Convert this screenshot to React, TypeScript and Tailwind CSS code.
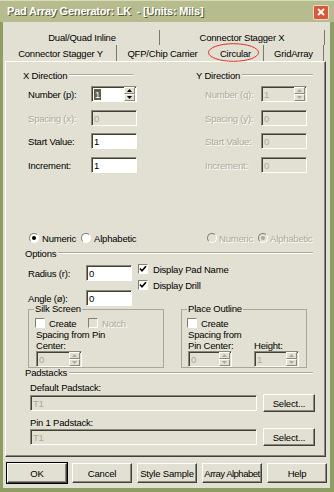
import React from "react";

type Kids = { children?: React.ReactNode; className?: string };

function Sunken({ children, className = "", disabled = false }: Kids & { disabled?: boolean }) {
  return (
    <div
      className={`flex h-[16px] items-center border border-t-[#8a8878] border-l-[#8a8878] border-b-white border-r-white shadow-[inset_1px_1px_0_#404036] ${
        disabled ? "bg-[#e2e0d2] text-[#aca899]" : "bg-white text-black"
      } ${className}`}
    >
      {children}
    </div>
  );
}

function Arrow({ up, disabled }: { up?: boolean; disabled?: boolean }) {
  return (
    <div className="flex flex-1 items-center justify-center border border-t-white border-l-white border-b-[#8a8878] border-r-[#8a8878] bg-[#e2e0d2]">
      <svg width="5" height="3" viewBox="0 0 5 3">
        <path d={up ? "M0 3 L2.5 0 L5 3Z" : "M0 0 L2.5 3 L5 0Z"} fill={disabled ? "#aca899" : "#000"} />
      </svg>
    </div>
  );
}

function SpinBox({ value, className = "", disabled, selected }: { value: string; className?: string; disabled?: boolean; selected?: boolean }) {
  return (
    <Sunken className={className} disabled={disabled}>
      <span className="flex-1 pl-[2px]">
        {selected ? <span className="bg-[#5f5f50] px-px text-white">{value}</span> : value}
      </span>
      <div className="mr-px flex h-[14px] w-[11px] flex-col">
        <Arrow up disabled={disabled} />
        <Arrow disabled={disabled} />
      </div>
    </Sunken>
  );
}

function Radio({ checked, disabled }: { checked?: boolean; disabled?: boolean }) {
  return (
    <span
      className={`flex h-[10px] w-[10px] shrink-0 items-center justify-center rounded-full border border-t-[#808070] border-l-[#808070] border-b-white border-r-white ${
        disabled ? "bg-[#e2e0d2]" : "bg-white"
      }`}
    >
      {checked && <span className={`h-[4px] w-[4px] rounded-full ${disabled ? "bg-[#aca899]" : "bg-black"}`} />}
    </span>
  );
}

function Check({ checked, disabled }: { checked?: boolean; disabled?: boolean }) {
  return (
    <span
      className={`flex h-[10px] w-[10px] shrink-0 items-center justify-center border border-t-[#808070] border-l-[#808070] border-b-white border-r-white ${
        disabled ? "bg-[#e2e0d2]" : "bg-white"
      }`}
    >
      {checked && (
        <svg width="8" height="8" viewBox="0 0 8 8">
          <path d="M1 3.5 L3 5.8 L7 1.2" stroke="#000" strokeWidth="1.6" fill="none" />
        </svg>
      )}
    </span>
  );
}

function Btn({ children, className = "", def = false }: Kids & { def?: boolean }) {
  return (
    <div
      className={`flex items-center justify-center whitespace-nowrap border border-t-white border-l-white border-b-[#404040] border-r-[#404040] bg-[#e2e0d2] ${
        def ? "shadow-[0_0_0_1px_#000,inset_-1px_-1px_0_#8a8878]" : "shadow-[inset_-1px_-1px_0_#8a8878]"
      } ${className}`}
    >
      {children}
    </div>
  );
}

function GroupLabel({ text, className = "" }: { text: string; className?: string }) {
  return (
    <div className={`flex items-center ${className}`}>
      <span className="whitespace-nowrap">{text}</span>
      <div className="ml-[2px] flex-1 border-t border-b border-t-[#aca899] border-b-white" />
    </div>
  );
}

function Tab({ children, className = "", sep = true }: Kids & { sep?: boolean }) {
  return (
    <div className={`flex items-center justify-center whitespace-nowrap ${sep ? "border-r border-r-[#7a786a]" : ""} ${className}`}>
      {children}
    </div>
  );
}

const dim = "text-[#aca899] [text-shadow:1px_1px_0_#fff]";

export default function App() {
  return (
    <div className="flex h-[492px] w-[334px] flex-col overflow-hidden bg-[#8e9e62] font-['Liberation_Sans',Arial,sans-serif] text-[9.5px] leading-[11px] tracking-[-0.2px] text-black">
      {/* title bar */}
      <div className="flex h-[22px] shrink-0 items-center border-t border-t-[#d8dcb8] bg-[#b7bc8e] pl-[7px] pr-[5px]">
        <span className="flex-1 whitespace-nowrap text-[11px] font-bold tracking-[-0.2px] text-white [text-shadow:1px_1px_0_#55573a]">
          Pad Array Generator: LK&nbsp; - [Units: Mils]
        </span>
        <div className="mt-px flex h-[15px] w-[16px] items-center justify-center rounded-[2px] border border-[#f0d8c8] bg-[#d65a38]">
          <svg width="8" height="8" viewBox="0 0 8 8">
            <path d="M1 1 L7 7 M7 1 L1 7" stroke="#fff" strokeWidth="1.8" />
          </svg>
        </div>
      </div>

      <div className="ml-[3px] mr-[4px] flex h-[466px] flex-col bg-[#e2e0d2]">
        {/* tabs */}
        <div className="mt-[8px] flex h-[15px] pl-[2px]">
          <Tab className="w-[155px]">Dual/Quad Inline</Tab>
          <Tab className="w-[165px]">Connector Stagger X</Tab>
        </div>
        <div className="flex h-[16px] pl-[2px]">
          <Tab className="w-[112px]">Connector Stagger Y</Tab>
          <Tab className="w-[91px]" sep={false}>QFP/Chip Carrier</Tab>
          <Tab className="relative w-[56px]">
            Circular
            <svg className="absolute left-0 top-[-2px]" width="52" height="19" viewBox="0 0 52 19">
              <ellipse cx="25.5" cy="9.5" rx="25" ry="8.8" fill="none" stroke="#e3302a" strokeWidth="1" />
            </svg>
          </Tab>
          <Tab className="w-[60px]">GridArray</Tab>
        </div>

        {/* panel */}
        <div className="ml-[2px] flex h-[396px] w-[321px] flex-col border border-t-white border-l-white border-b-[#404040] border-r-[#404040] shadow-[inset_-1px_-1px_0_#8a8878]">
          <div className="mt-[7px] flex">
            <div className="ml-[17px] flex w-[114px] flex-col">
              <GroupLabel text="X Direction" className="h-[12px] w-[110px]" />
              <div className="mt-[5px] flex h-[16px] items-center pl-[5px]">
                <span className="w-[63px]">Number (p):</span>
                <SpinBox className="w-[46px]" value="1" selected />
              </div>
              <div className="mt-[8px] flex h-[16px] items-center pl-[5px]">
                <span className={`w-[63px] ${dim}`}>Spacing (x):</span>
                <Sunken className="w-[46px] pl-[2px]" disabled>0</Sunken>
              </div>
              <div className="mt-[7px] flex h-[16px] items-center pl-[5px]">
                <span className="w-[63px]">Start Value:</span>
                <Sunken className="w-[46px] pl-[2px]">1</Sunken>
              </div>
              <div className="mt-[8px] flex h-[16px] items-center pl-[5px]">
                <span className="w-[63px]">Increment:</span>
                <Sunken className="w-[46px] pl-[2px]">1</Sunken>
              </div>
            </div>
            <div className="ml-[59px] flex w-[117px] flex-col">
              <GroupLabel text="Y Direction" className="h-[12px]" />
              <div className="mt-[5px] flex h-[16px] items-center pl-[9px]">
                <span className={`w-[56px] ${dim}`}>Number (q):</span>
                <SpinBox className="w-[46px]" value="1" disabled />
              </div>
              <div className="mt-[8px] flex h-[16px] items-center pl-[9px]">
                <span className={`w-[56px] ${dim}`}>Spacing (y):</span>
                <Sunken className="w-[46px] pl-[2px]" disabled>0</Sunken>
              </div>
              <div className="mt-[7px] flex h-[16px] items-center pl-[9px]">
                <span className={`w-[56px] ${dim}`}>Start Value:</span>
                <Sunken className="w-[46px] pl-[2px]" disabled>0</Sunken>
              </div>
              <div className="mt-[8px] flex h-[16px] items-center pl-[9px]">
                <span className={`w-[56px] ${dim}`}>Increment:</span>
                <Sunken className="w-[46px] pl-[2px]" disabled>0</Sunken>
              </div>
            </div>
          </div>

          <div className="mt-[59px] flex h-[12px] items-center pl-[23px]">
            <Radio checked />
            <span className="ml-[3px] w-[39px]">Numeric</span>
            <Radio />
            <span className="ml-[3px] w-[42px]">Alphabetic</span>
            <span className="ml-[71px]" />
            <Radio disabled />
            <span className={`ml-[2px] w-[39px] ${dim}`}>Numeric</span>
            <Radio checked disabled />
            <span className={`ml-[2px] ${dim}`}>Alphabetic</span>
          </div>

          <GroupLabel text="Options" className="ml-[19px] mt-[3px] h-[12px] w-[288px]" />
          <div className="flex">
            <div className="ml-[22px] flex flex-col">
              <div className="mt-[6px] flex h-[16px] items-center">
                <span className="w-[58px]">Radius (r):</span>
                <Sunken className="w-[46px] pl-[2px]">0</Sunken>
              </div>
              <div className="mt-[9px] flex h-[16px] items-center">
                <span className="w-[58px]">Angle (ø):</span>
                <Sunken className="w-[46px] pl-[2px]">0</Sunken>
              </div>
            </div>
            <div className="ml-[6px] flex flex-col">
              <div className="mt-[5px] flex h-[10px] items-center">
                <Check checked />
                <span className="ml-[5px]">Display Pad Name</span>
              </div>
              <div className="mt-[6px] flex h-[10px] items-center">
                <Check checked />
                <span className="ml-[5px]">Display Drill</span>
              </div>
            </div>
          </div>

          <div className="mt-[-3px] flex">
            <fieldset className="ml-[22px] h-[65px] w-[136px] border border-[#aca899]">
              <legend className="ml-[5px] px-px leading-[12px]">Silk Screen</legend>
              <div className="mt-[3px] flex h-[10px] items-center pl-[6px]">
                <Check />
                <span className="ml-[4px] w-[39px]">Create</span>
                <Check disabled />
                <span className={`ml-[4px] ${dim}`}>Notch</span>
              </div>
              <div className="mt-[1px] pl-[7px]">
                Spacing from Pin
                <br />
                Center:
              </div>
              <div className="pl-[7px]">
                <SpinBox className="w-[46px]" value="0" disabled />
              </div>
            </fieldset>
            <fieldset className="ml-[17px] h-[65px] w-[126px] border border-[#aca899]">
              <legend className="ml-[5px] px-px leading-[12px]">Place Outline</legend>
              <div className="mt-[3px] flex h-[10px] items-center pl-[5px]">
                <Check />
                <span className="ml-[4px]">Create</span>
              </div>
              <div className="mt-[1px] flex pl-[6px]">
                <div className="flex w-[66px] flex-col">
                  <div>Spacing from</div>
                  <div>Pin Center:</div>
                  <SpinBox className="w-[44px]" value="0" disabled />
                </div>
                <div className="flex flex-col">
                  <div className="h-[11px]" />
                  <div>Height:</div>
                  <SpinBox className="w-[45px]" value="1" disabled />
                </div>
              </div>
            </fieldset>
          </div>

          <GroupLabel text="Padstacks" className="ml-[19px] h-[10px] w-[288px] leading-[10px]" />
          <div className="mt-[4px] pl-[24px]">Default Padstack:</div>
          <div className="mt-[1px] flex h-[18px] items-center pl-[24px]">
            <Sunken className="w-[227px] pl-[2px]" disabled>T1</Sunken>
            <Btn className="ml-[6px] h-[18px] w-[52px]">Select...</Btn>
          </div>
          <div className="mt-[5px] pl-[24px]">Pin 1 Padstack:</div>
          <div className="flex h-[18px] items-center pl-[24px]">
            <Sunken className="w-[227px] pl-[2px]" disabled>T1</Sunken>
            <Btn className="ml-[6px] h-[18px] w-[52px]">Select...</Btn>
          </div>
        </div>

        {/* dialog buttons */}
        <div className="mt-[6px] flex gap-[5px] pl-[4px]">
          <Btn def className="h-[20px] w-[60px]">OK</Btn>
          <Btn className="h-[20px] w-[60px]">Cancel</Btn>
          <Btn className="h-[20px] w-[60px]">Style Sample</Btn>
          <Btn className="h-[20px] w-[60px] tracking-[-0.5px]">Array Alphabet</Btn>
          <Btn className="h-[20px] w-[60px]">Help</Btn>
        </div>
      </div>
    </div>
  );
}
